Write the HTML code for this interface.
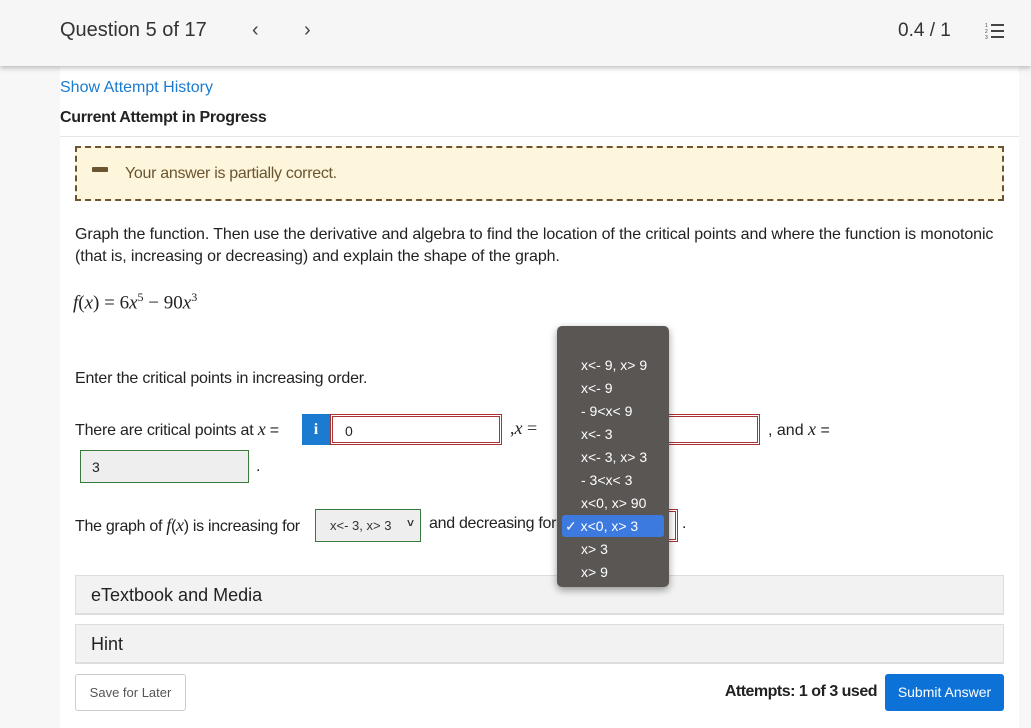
<!DOCTYPE html>
<html><head><style>
body{margin:0;width:1031px;height:728px;background:#f7f7f7;font-family:"Liberation Sans",sans-serif;color:#222;position:relative;overflow:hidden}
.a{position:absolute;white-space:nowrap}
.hdr{position:absolute;left:0;top:0;width:1031px;height:66px;background:#f6f6f6;box-shadow:0 2px 5px rgba(0,0,0,.25);z-index:2}
.main{position:absolute;left:60px;top:66px;width:959px;height:662px;background:#fff}
.m{font-family:"Liberation Serif",serif;font-style:italic}
.box{position:absolute;border:1px solid #ccc;box-sizing:border-box;white-space:nowrap}
.red{border:3px double #a33}
.dd{position:absolute;left:557px;top:326px;width:112px;height:261px;background:#5a5654;border-radius:5px;box-shadow:0 3px 8px rgba(0,0,0,.4);z-index:5;color:#fff;font-size:14px}
.dd div{position:absolute;left:24px;white-space:nowrap}
.panel{position:absolute;left:75px;width:929px;height:40px;background:#f2f2f2;border:1px solid #ddd;box-sizing:border-box;font-size:18px;padding:9px 15px;border-bottom:2px solid #ddd}
</style></head><body>
<div class="hdr">
<div class="a" style="left:60px;top:19px;font-size:20px;color:#333">Question 5 of 17</div>
<div class="a" style="left:252px;top:19px;font-size:20px;color:#444">&#8249;</div>
<div class="a" style="left:304px;top:19px;font-size:20px;color:#444">&#8250;</div>
<div class="a" style="left:898px;top:20px;font-size:19px;color:#333">0.4 / 1</div>
<svg class="a" style="left:985px;top:22px" width="20" height="18"><g stroke="#444" stroke-width="2"><line x1="6" y1="3" x2="19" y2="3"/><line x1="6" y1="9" x2="19" y2="9"/><line x1="6" y1="15" x2="19" y2="15"/></g><g fill="#444" font-size="5"><text x="0" y="5">1</text><text x="0" y="11">2</text><text x="0" y="17">3</text></g></svg>
</div>
<div class="main"></div>
<div class="a" style="left:60px;top:79px;font-size:16px;color:#1a7bd0">Show Attempt History</div>
<div class="a" style="left:60px;top:109px;font-size:16px;font-weight:bold;color:#222;letter-spacing:-0.3px">Current Attempt in Progress</div>
<div class="a" style="left:60px;top:136px;width:959px;border-top:1px solid #e5e5e5"></div>
<div class="a" style="left:75px;top:146px;width:929px;height:55px;box-sizing:border-box;border:2px dashed #6b5530;background:#fdf6dc"></div>
<div class="a" style="left:92px;top:167px;width:16px;height:5px;background:#6b5530;border-radius:1px"></div>
<div class="a" style="left:125px;top:165px;font-size:16px;color:#6b5530;letter-spacing:-0.3px">Your answer is partially correct.</div>
<div class="a" style="left:75px;top:226px;font-size:16px;letter-spacing:-0.1px">Graph the function. Then use the derivative and algebra to find the location of the critical points and where the function is monotonic</div>
<div class="a" style="left:75px;top:248px;font-size:16px;letter-spacing:-0.1px">(that is, increasing or decreasing) and explain the shape of the graph.</div>
<div class="a" style="left:73px;top:290px;font-size:19px;font-family:'Liberation Serif',serif"><i>f</i>(<i>x</i>) = 6<i>x</i><sup style="font-size:12px">5</sup> &minus; 90<i>x</i><sup style="font-size:12px">3</sup></div>
<div class="a" style="left:75px;top:370px;font-size:16px;letter-spacing:-0.2px">Enter the critical points in increasing order.</div>
<div class="a" style="left:75px;top:419px;font-size:16px;letter-spacing:-0.2px">There are critical points at <span class="m" style="font-size:18px">x</span> =</div>
<div class="a" style="left:302px;top:414px;width:28px;height:31px;background:#1a7bd0;color:#fff;font-weight:bold;font-size:16px;text-align:center;line-height:31px;font-family:'Liberation Serif',serif">i</div>
<div class="box red" style="left:330px;top:414px;width:172px;height:31px;font-size:14px;padding:6px 12px">0</div>
<div class="a" style="left:510px;top:418px;font-size:18px;font-family:'Liberation Serif',serif">,<i>x</i> =</div>
<div class="box red" style="left:660px;top:414px;width:100px;height:31px"></div>
<div class="a" style="left:768px;top:419px;font-size:16px">, and <span class="m" style="font-size:18px">x</span> =</div>
<div class="box" style="left:80px;top:450px;width:169px;height:33px;background:#eee;border-color:#3c7a3c;font-size:14px;padding:8px 11px">3</div>
<div class="a" style="left:256px;top:458px;font-size:16px">.</div>
<div class="a" style="left:75px;top:515px;font-size:16px;letter-spacing:-0.3px">The graph of <span class="m" style="font-size:18px">f</span>(<span class="m" style="font-size:18px">x</span>) is increasing for</div>
<div class="box" style="left:315px;top:509px;width:106px;height:33px;background:#eee;border-color:#3c7a3c;font-size:13px;padding:8px 14px;color:#333">x&lt;- 3, x&gt; 3 <span style="position:absolute;right:6px;top:6px;font-size:12px;font-weight:bold">&#709;</span></div>
<div class="a" style="left:429px;top:515px;font-size:16px;letter-spacing:-0.3px">and decreasing for</div>
<div class="box red" style="left:600px;top:509px;width:78px;height:33px"></div>
<div class="a" style="left:682px;top:515px;font-size:16px">.</div>
<div class="dd">
<div style="top:31px">x&lt;- 9, x&gt; 9</div>
<div style="top:54px">x&lt;- 9</div>
<div style="top:77px">- 9&lt;x&lt; 9</div>
<div style="top:100px">x&lt;- 3</div>
<div style="top:123px">x&lt;- 3, x&gt; 3</div>
<div style="top:146px">- 3&lt;x&lt; 3</div>
<div style="top:169px">x&lt;0, x&gt; 90</div>
<div style="left:5px;top:189px;width:102px;height:22px;background:#3d7ae0;border-radius:3px"></div>
<div style="left:8px;top:192px">&#10003; x&lt;0, x&gt; 3</div>
<div style="top:215px">x&gt; 3</div>
<div style="top:238px">x&gt; 9</div>
</div>
<div class="panel" style="top:575px">eTextbook and Media</div>
<div class="panel" style="top:624px">Hint</div>
<div class="box" style="left:75px;top:674px;width:111px;height:37px;background:#fff;border-radius:3px;font-size:13px;color:#555;padding:10px 0;text-align:center">Save for Later</div>
<div class="a" style="right:154px;top:683px;font-size:16px;font-weight:bold;letter-spacing:-0.5px">Attempts: 1 of 3 used</div>
<div class="a" style="left:885px;top:674px;width:119px;height:37px;background:#0d72d8;border-radius:3px;color:#fff;font-size:14px;text-align:center;line-height:37px">Submit Answer</div>
</body></html>
